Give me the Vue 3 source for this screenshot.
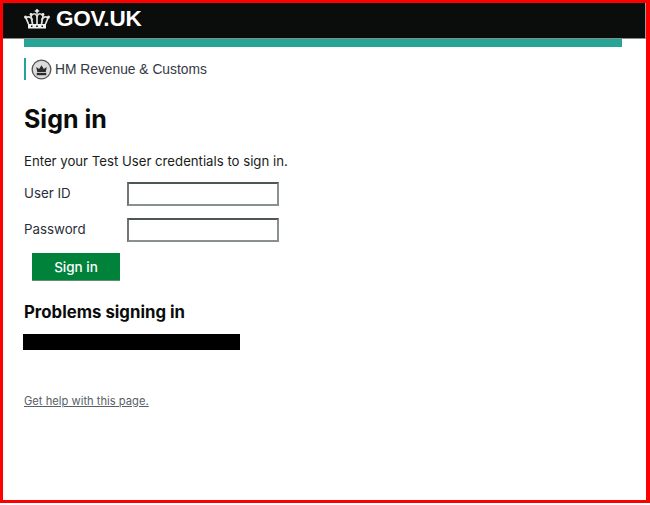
<script setup>
const title = "Sign in";
</script>
<template>
	<div class="frame">
		<header class="topbar">
			<svg class="crown" viewBox="0 0 26 20" width="26" height="20">
				<path d="M12.200 0h1.600v1.300h1.400v1.500h-1.400v2h-1.600v-2h-1.400V1.300h1.400z" fill="#f0f0f0" />
				<g fill="none" stroke="#e0e0e0" stroke-width="1.700">
					<path d="M4.500 15L2 9c2.500-2 5-1 6.500 2" />
					<path d="M21.500 15L24 9c-2.500-2-5-1-6.500 2" />
					<path d="M8.500 15L7 7c2-3 4.500-3 6 0 1.500-3 4-3 6 0L17.500 15" />
					<path d="M13 7v8" />
				</g>
				<circle cx="1.500" cy="8" r="1.500" fill="#e8e8e8" />
				<circle cx="24.500" cy="8" r="1.500" fill="#e8e8e8" />
				<circle cx="7" cy="5.500" r="1.400" fill="#e8e8e8" />
				<circle cx="19" cy="5.500" r="1.400" fill="#e8e8e8" />
				<rect x="4" y="15" width="18" height="4.500" fill="#f0f0f0" />
				<g fill="#0b0c0c">
					<rect x="7" y="16.500" width="1.500" height="1.500" />
					<rect x="12.200" y="16.500" width="1.600" height="1.500" />
					<rect x="17.500" y="16.500" width="1.500" height="1.500" />
				</g>
			</svg>
			<span class="wordmark">GOV.UK</span>
		</header>
		<div class="stripe"></div>
		<div class="org">
			<svg class="org-logo" viewBox="0 0 22 22" width="21" height="21">
				<circle cx="11" cy="11" r="9.800" fill="#dcdcdc" stroke="#555" stroke-width="1.400" />
				<path d="M6.500 13.500l-1-5 3 2 2.500-4 2.500 4 3-2-1 5z" fill="#2c2c2c" />
				<rect x="6" y="14.500" width="10" height="2.500" fill="#2c2c2c" />
			</svg>
			<span>HM Revenue &amp; Customs</span>
		</div>
		<main class="content">
			<h1>{{ title }}</h1>
			<p class="intro">Enter your Test User credentials to sign in.</p>
			<form class="signin" @submit.prevent>
				<div class="field">
					<label for="userid">User ID</label>
					<input id="userid" type="text" />
				</div>
				<div class="field">
					<label for="password">Password</label>
					<input id="password" type="password" />
				</div>
				<button class="submit" type="submit">Sign in</button>
			</form>
			<h2>Problems signing in</h2>
			<div class="redacted"></div>
			<a class="help" href="#">Get help with this page.</a>
		</main>
	</div>
</template>
<style scoped>
.frame {
	box-sizing: border-box;
	width: 650px;
	height: 503px;
	border: solid #ff0000;
	border-width: 3px 4px 3px 3px;
	background: #fff;
	font-family: Inter, "Noto Sans", sans-serif;
	color: #0b0c0c;
	overflow: hidden;
}
.topbar {
	height: 32px;
	background: #0b0c0c;
	border-bottom: 1px solid #8a8a8a;
	border-right: 1px solid #9a9a9a;
	display: flex;
	align-items: center;
	padding-left: 21px;
	padding-bottom: 3px;
	gap: 6px;
}
.crown {
	flex: none;
}
.wordmark {
	color: #fff;
	font-family: "Liberation Sans", Arial, sans-serif;
	font-weight: 700;
	font-size: 22.500px;
	letter-spacing: -0.2px;
}
.stripe {
	height: 8px;
	margin: 0 24px 0 21px;
	background: #26a596;
}
.org {
	display: flex;
	align-items: center;
	gap: 3px;
	height: 22px;
	margin: 11px 0 0 21px;
	padding-left: 5px;
	border-left: 2px solid #28a197;
	font-family: "Liberation Sans", Arial, sans-serif;
	font-size: 13.800px;
	color: #353945;
}
.content {
	padding-left: 21px;
}
h1 {
	margin: 23px 0 0;
	font-size: 25px;
	line-height: 32px;
	font-weight: 700;
}
.intro {
	margin: 16px 0 0;
	font-size: 13.200px;
	line-height: 20px;
	color: #1a1c20;
}
.signin {
	margin-top: 11px;
}
.field {
	display: flex;
	align-items: center;
	height: 24px;
	margin-bottom: 12px;
}
.field label {
	width: 103px;
	padding-bottom: 2px;
	font-size: 13.300px;
	color: #2a2e3a;
}
.field input {
	box-sizing: border-box;
	width: 152px;
	height: 24px;
	border: 2px solid;
	border-color: #4f5658 #8a8f91 #8a8f91 #6f7678;
	background: #fff;
	padding: 0;
	outline: none;
}
.submit {
	display: block;
	box-sizing: border-box;
	width: 88px;
	height: 28px;
	margin: -1px 0 0 8px;
	border: none;
	border-bottom: 1px solid #5f8f70;
	background: #00823b;
	color: #fff;
	font-family: inherit;
	font-size: 13.500px;
	font-weight: 500;
	padding: 0;
}
h2 {
	margin: 19px 0 0;
	font-size: 16.800px;
	line-height: 24px;
	font-weight: 700;
}
.redacted {
	width: 217px;
	height: 16px;
	margin: 10px 0 0 -1px;
	background: #000;
}
.help {
	display: block;
	width: fit-content;
	margin-top: 44px;
	font-size: 11.200px;
	line-height: 14px;
	color: #5a5f68;
	text-decoration: underline;
}
</style>
<style>
html,
body {
	margin: 0;
	background: #fff;
}
</style>
